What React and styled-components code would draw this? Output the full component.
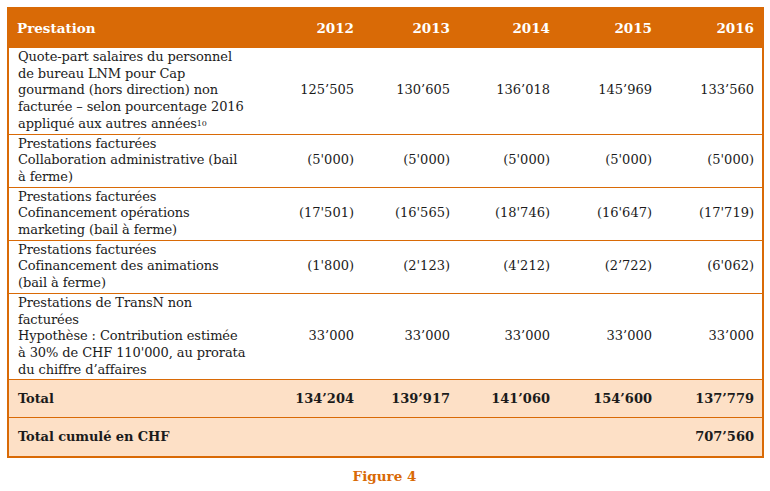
import React from "react";
import styled, { createGlobalStyle } from "styled-components";

const orange = "#d96a06";
const peach = "#fde0c6";

const Global = createGlobalStyle`
  body {
    margin: 0;
    background: #fff;
    font-family: "DejaVu Serif", Georgia, serif;
    color: #1b1b1b;
  }
`;

const Page = styled.div`
  padding: 7px 8px 0 7px;
  width: 755px;
`;

const Table = styled.table`
  width: 755px;
  border-collapse: collapse;
  table-layout: fixed;
  border: 2px solid ${orange};
  font-size: 13px;
  line-height: 16.7px;
`;

const HeadCell = styled.th`
  background: ${orange};
  color: #fff;
  font-weight: bold;
  font-size: 13.5px;
  height: 38px;
  padding: 0 8px;
  text-align: ${(p) => (p.left ? "left" : "right")};
  vertical-align: middle;
`;

const Row = styled.tr`
  border-top: 1.5px solid ${orange};
  background: ${(p) => (p.total ? peach : "#fff")};
  font-weight: ${(p) => (p.total ? "bold" : "normal")};
`;

const Label = styled.td`
  padding: 1px 4px 1px 9px;
  vertical-align: ${(p) => (p.total ? "middle" : "top")};
  height: ${(p) => p.h || "auto"};
  text-align: left;
  white-space: nowrap;
  letter-spacing: -0.1px;
`;

const Num = styled.td`
  padding: 0 8px;
  text-align: right;
  vertical-align: middle;
  white-space: nowrap;
`;

const Sup = styled.span`
  font-size: 8px;
  vertical-align: 2px;
  line-height: 0;
`;

const Caption = styled.div`
  text-align: center;
  color: ${orange};
  font-weight: bold;
  font-size: 13.5px;
  margin-top: 10px;
`;

const years = ["2012", "2013", "2014", "2015", "2016"];

const lines = (arr) =>
  arr.map((l, i) => (
    <React.Fragment key={i}>
      {i > 0 && <br />}
      {l}
    </React.Fragment>
  ));

const rows = [
  {
    label: lines([
      "Quote-part salaires du personnel",
      "de bureau LNM pour Cap",
      "gourmand (hors direction) non",
      "facturée – selon pourcentage 2016",
      <>
        appliqué aux autres années<Sup>10</Sup>
      </>,
    ]),
    values: ["125’505", "130’605", "136’018", "145’969", "133’560"],
  },
  {
    label: lines([
      "Prestations facturées",
      "Collaboration administrative (bail",
      "à ferme)",
    ]),
    values: ["(5'000)", "(5'000)", "(5'000)", "(5'000)", "(5'000)"],
  },
  {
    label: lines([
      "Prestations facturées",
      "Cofinancement opérations",
      "marketing (bail à ferme)",
    ]),
    values: ["(17'501)", "(16'565)", "(18'746)", "(16'647)", "(17'719)"],
  },
  {
    label: lines([
      "Prestations facturées",
      "Cofinancement des animations",
      "(bail à ferme)",
    ]),
    values: ["(1'800)", "(2'123)", "(4'212)", "(2’722)", "(6'062)"],
  },
  {
    label: lines([
      "Prestations de TransN non",
      "facturées",
      "Hypothèse : Contribution estimée",
      "à 30% de CHF 110'000, au prorata",
      "du chiffre d’affaires",
    ]),
    values: ["33’000", "33’000", "33’000", "33’000", "33’000"],
  },
];

export default function App() {
  return (
    <Page>
      <Global />
      <Table>
        <colgroup>
          <col style={{ width: 254 }} />
          <col style={{ width: 100 }} />
          <col style={{ width: 96 }} />
          <col style={{ width: 100 }} />
          <col style={{ width: 102 }} />
          <col style={{ width: 103 }} />
        </colgroup>
        <thead>
          <tr>
            <HeadCell left>Prestation</HeadCell>
            {years.map((y) => (
              <HeadCell key={y}>{y}</HeadCell>
            ))}
          </tr>
        </thead>
        <tbody>
          {rows.map((r, i) => (
            <Row key={i}>
              <Label>{r.label}</Label>
              {r.values.map((v, j) => (
                <Num key={j}>{v}</Num>
              ))}
            </Row>
          ))}
          <Row total>
            <Label total h="35px">Total</Label>
            {["134’204", "139’917", "141’060", "154’600", "137’779"].map((v) => (
              <Num key={v}>{v}</Num>
            ))}
          </Row>
          <Row total>
            <Label total h="36px" colSpan={5}>
              Total cumulé en CHF
            </Label>
            <Num>707’560</Num>
          </Row>
        </tbody>
      </Table>
      <Caption>Figure 4</Caption>
    </Page>
  );
}
